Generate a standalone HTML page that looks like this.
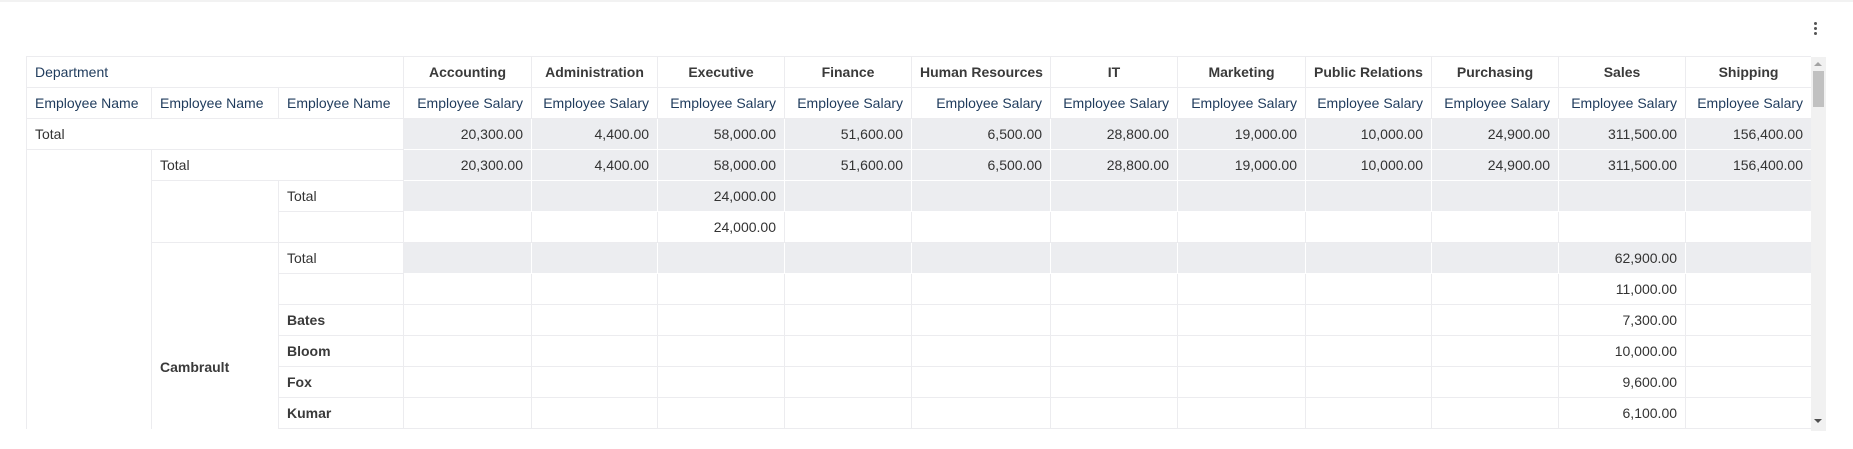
<!DOCTYPE html>
<html><head><meta charset="utf-8"><style>
*{box-sizing:border-box;margin:0;padding:0}
html,body{width:1853px;height:449px;overflow:hidden}
body{background:#fff;font-family:"Liberation Sans",Arial,sans-serif;font-size:14px;position:relative}
.topline{position:absolute;left:0;top:0;width:1853px;height:2px;background:#f2f2f2}
.kebab{position:absolute;left:1814px;top:22px;width:4px}
.kebab i{display:block;width:3px;height:3px;border-radius:50%;background:#555;margin-bottom:2px}
.wrap{position:absolute;left:26px;top:56px;width:1785px;height:373px;overflow:hidden}
table{border-collapse:collapse;table-layout:fixed;width:1785px}
td{height:31px;border:1px solid #ececef;padding:0 8px;white-space:nowrap;overflow:hidden;color:#333;vertical-align:middle}
.h{font-weight:bold;text-align:center;color:#3a3a3a}
.b{color:#1f3b5c}
.r{text-align:right}
.g{background:#ecedf0;border-color:#fff}
.n{font-weight:bold;color:#3a3a3a}
.sb{position:absolute;left:1811px;top:57px;width:15px;height:374px;background:#f1f1f1}
.thumb{position:absolute;left:2px;top:14px;width:11px;height:36px;background:#c1c1c1}
.up{position:absolute;left:3px;top:5px;width:0;height:0;border-left:4px solid transparent;border-right:4px solid transparent;border-bottom:4px solid #a3a3a3}
.dn{position:absolute;left:3px;bottom:8px;width:0;height:0;border-left:4px solid transparent;border-right:4px solid transparent;border-top:4px solid #505050}
</style></head><body>
<div class="topline"></div>
<div class="kebab"><i></i><i></i><i></i></div>
<div class="wrap"><table>
<colgroup><col style="width:125px"><col style="width:127px"><col style="width:125px"><col style="width:128px"><col style="width:126px"><col style="width:127px"><col style="width:127px"><col style="width:139px"><col style="width:127px"><col style="width:128px"><col style="width:126px"><col style="width:127px"><col style="width:127px"><col style="width:126px"></colgroup>
<tr><td colspan="3" class="b">Department</td><td class="h">Accounting</td><td class="h">Administration</td><td class="h">Executive</td><td class="h">Finance</td><td class="h">Human Resources</td><td class="h">IT</td><td class="h">Marketing</td><td class="h">Public Relations</td><td class="h">Purchasing</td><td class="h">Sales</td><td class="h">Shipping</td></tr>
<tr><td class="b">Employee Name</td><td class="b">Employee Name</td><td class="b">Employee Name</td><td class="b r">Employee Salary</td><td class="b r">Employee Salary</td><td class="b r">Employee Salary</td><td class="b r">Employee Salary</td><td class="b r">Employee Salary</td><td class="b r">Employee Salary</td><td class="b r">Employee Salary</td><td class="b r">Employee Salary</td><td class="b r">Employee Salary</td><td class="b r">Employee Salary</td><td class="b r">Employee Salary</td></tr>
<tr><td colspan="3">Total</td><td class="g r">20,300.00</td><td class="g r">4,400.00</td><td class="g r">58,000.00</td><td class="g r">51,600.00</td><td class="g r">6,500.00</td><td class="g r">28,800.00</td><td class="g r">19,000.00</td><td class="g r">10,000.00</td><td class="g r">24,900.00</td><td class="g r">311,500.00</td><td class="g r">156,400.00</td></tr>
<tr><td rowspan="14"></td><td colspan="2">Total</td><td class="g r">20,300.00</td><td class="g r">4,400.00</td><td class="g r">58,000.00</td><td class="g r">51,600.00</td><td class="g r">6,500.00</td><td class="g r">28,800.00</td><td class="g r">19,000.00</td><td class="g r">10,000.00</td><td class="g r">24,900.00</td><td class="g r">311,500.00</td><td class="g r">156,400.00</td></tr>
<tr><td rowspan="2"></td><td>Total</td><td class="g"></td><td class="g"></td><td class="g r">24,000.00</td><td class="g"></td><td class="g"></td><td class="g"></td><td class="g"></td><td class="g"></td><td class="g"></td><td class="g"></td><td class="g"></td></tr>
<tr><td></td><td></td><td></td><td class="r">24,000.00</td><td></td><td></td><td></td><td></td><td></td><td></td><td></td><td></td></tr>
<tr><td rowspan="8" class="n">Cambrault</td><td>Total</td><td class="g"></td><td class="g"></td><td class="g"></td><td class="g"></td><td class="g"></td><td class="g"></td><td class="g"></td><td class="g"></td><td class="g"></td><td class="g r">62,900.00</td><td class="g"></td></tr>
<tr><td></td><td></td><td></td><td></td><td></td><td></td><td></td><td></td><td></td><td></td><td class="r">11,000.00</td><td></td></tr>
<tr><td class="n">Bates</td><td></td><td></td><td></td><td></td><td></td><td></td><td></td><td></td><td></td><td class="r">7,300.00</td><td></td></tr>
<tr><td class="n">Bloom</td><td></td><td></td><td></td><td></td><td></td><td></td><td></td><td></td><td></td><td class="r">10,000.00</td><td></td></tr>
<tr><td class="n">Fox</td><td></td><td></td><td></td><td></td><td></td><td></td><td></td><td></td><td></td><td class="r">9,600.00</td><td></td></tr>
<tr><td class="n">Kumar</td><td></td><td></td><td></td><td></td><td></td><td></td><td></td><td></td><td></td><td class="r">6,100.00</td><td></td></tr>
<tr><td class="n">Ozer</td><td></td><td></td><td></td><td></td><td></td><td></td><td></td><td></td><td></td><td class="r">11,500.00</td><td></td></tr>
<tr><td class="n">Smith</td><td></td><td></td><td></td><td></td><td></td><td></td><td></td><td></td><td></td><td class="r">7,400.00</td><td></td></tr>
</table></div>
<div class="sb"><div class="up"></div><div class="thumb"></div><div class="dn"></div></div>
</body></html>
